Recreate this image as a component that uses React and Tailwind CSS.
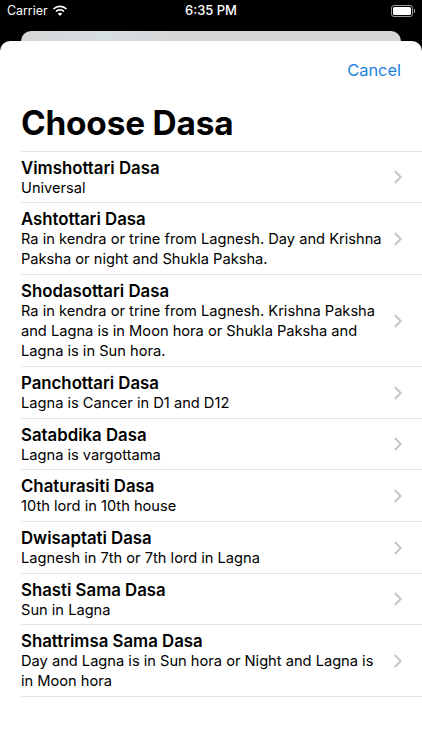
import React from "react";
import { ChevronRight } from "lucide-react";

const rows = [
  { title: "Vimshottari Dasa", sub: "Universal", h: "h-[51px]" },
  { title: "Ashtottari Dasa", sub: "Ra in kendra or trine from Lagnesh. Day and Krishna Paksha or night and Shukla Paksha.", h: "h-[72px]" },
  { title: "Shodasottari Dasa", sub: "Ra in kendra or trine from Lagnesh. Krishna Paksha and Lagna is in Moon hora or Shukla Paksha and Lagna is in Sun hora.", h: "h-[92px]" },
  { title: "Panchottari Dasa", sub: "Lagna is Cancer in D1 and D12", h: "h-[52px]" },
  { title: "Satabdika Dasa", sub: "Lagna is vargottama", h: "h-[51px]" },
  { title: "Chaturasiti Dasa", sub: "10th lord in 10th house", h: "h-[52px]" },
  { title: "Dwisaptati Dasa", sub: "Lagnesh in 7th or 7th lord in Lagna", h: "h-[52px]" },
  { title: "Shasti Sama Dasa", sub: "Sun in Lagna", h: "h-[51px]" },
  { title: "Shattrimsa Sama Dasa", sub: "Day and Lagna is in Sun hora or Night and Lagna is in Moon hora", h: "h-[72px]" },
];

const Wifi = () => (
  <svg width="16" height="12" viewBox="0 0 16 12" fill="white">
    <path d="M8 2.2c2.3 0 4.4.9 6 2.4l1.1-1.2A10.3 10.3 0 0 0 8 .5 10.3 10.3 0 0 0 .9 3.4L2 4.6a8.6 8.6 0 0 1 6-2.4z" />
    <path d="M8 5.8c1.3 0 2.5.5 3.4 1.3l1.2-1.2A6.7 6.7 0 0 0 8 4.1c-1.8 0-3.4.7-4.6 1.8l1.2 1.2c.9-.8 2.1-1.3 3.4-1.3z" />
    <path d="M8 7.7c-.9 0-1.6.3-2.2.8L8 11l2.2-2.5c-.6-.5-1.3-.8-2.2-.8z" />
  </svg>
);

const Battery = () => (
  <div className="flex items-center">
    <div className="w-[22px] h-[12px] rounded-[3px] border border-[#9a9a9a] p-[1px]">
      <div className="w-full h-full rounded-[1.5px] bg-white" />
    </div>
    <div className="w-[1px] h-[4px] ml-[1px] bg-[#9a9a9a]" />
  </div>
);

export default function App() {
  return (
    <div className="w-[422px] h-[750px] overflow-hidden flex flex-col bg-black font-['Inter','Noto_Sans',sans-serif]">
      <div className="h-[31px] shrink-0 flex items-center justify-between pl-[7px] pr-[7px] pb-[9px] text-white text-[12.4px]">
        <div className="flex items-center gap-[4px] w-[120px]">
          <span>Carrier</span>
          <Wifi />
        </div>
        <span className="font-medium text-[13px]">6:35 PM</span>
        <div className="w-[120px] flex justify-end">
          <Battery />
        </div>
      </div>
      <div className="h-[10px] shrink-0 mx-[21px] rounded-t-[10px] bg-[linear-gradient(90deg,#d6d6d6_0%,#d6dee2_22%,#d6d6d6_40%)]" />
      <div className="flex-1 bg-white rounded-t-[10px]">
        <div className="h-[58px] pt-[1px] flex items-center justify-end pr-[21px] text-[16.4px] text-[#1d7fe0]">
          Cancel
        </div>
        <h1 className="h-[50px] mb-[2px] pl-[21px] flex items-center text-[33.4px] leading-none font-bold tracking-[-0.2px] text-black">
          Choose Dasa
        </h1>
        <div className="ml-[21px] border-t border-[#e4e4e6]">
          {rows.map((row) => (
            <div key={row.title} className={`${row.h} flex items-center border-b border-[#e4e4e6]`}>
              <div className="w-[362px] shrink-0 text-black">
                <div className="mt-[1px] text-[16.8px] leading-[21px] font-semibold">{row.title}</div>
                <div className="-mt-[1px] text-[14.65px] leading-[20px]">{row.sub}</div>
              </div>
              <ChevronRight size={22} strokeWidth={2} className="ml-[4px] text-[#c4c4c7]" />
            </div>
          ))}
        </div>
      </div>
    </div>
  );
}
